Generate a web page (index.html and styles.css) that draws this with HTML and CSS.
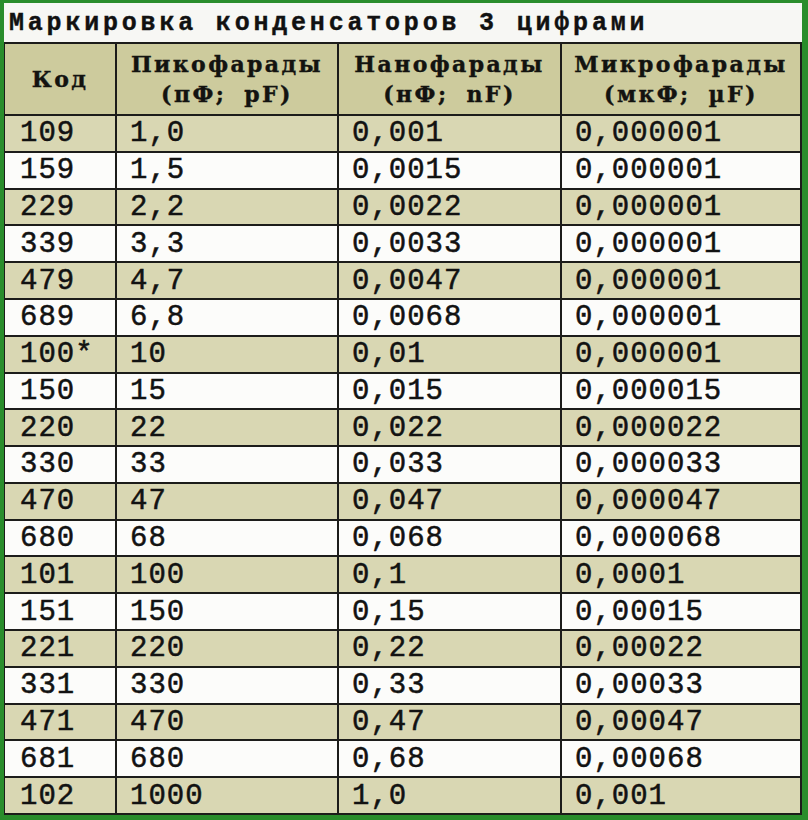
FILE: index.html
```html
<!DOCTYPE html>
<html lang="ru">
<head>
<meta charset="utf-8">
<title>Маркировка конденсаторов 3 цифрами</title>
<link rel="stylesheet" href="styles.css">
</head>
<body>
<div class="frame">
  <div class="title">Маркировка конденсаторов 3 цифрами</div>
  <div class="table">
    <div class="row head">
      <div class="c h">Код</div>
      <div class="c h"><span>Пикофарады</span><span>(пФ; pF)</span></div>
      <div class="c h"><span>Нанофарады</span><span>(нФ; nF)</span></div>
      <div class="c h"><span>Микрофарады</span><span>(мкФ; µF)</span></div>
    </div>
    <div class="row alt"><div class="c">109</div><div class="c">1,0</div><div class="c">0,001</div><div class="c">0,000001</div></div>
    <div class="row"><div class="c">159</div><div class="c">1,5</div><div class="c">0,0015</div><div class="c">0,000001</div></div>
    <div class="row alt"><div class="c">229</div><div class="c">2,2</div><div class="c">0,0022</div><div class="c">0,000001</div></div>
    <div class="row"><div class="c">339</div><div class="c">3,3</div><div class="c">0,0033</div><div class="c">0,000001</div></div>
    <div class="row alt"><div class="c">479</div><div class="c">4,7</div><div class="c">0,0047</div><div class="c">0,000001</div></div>
    <div class="row"><div class="c">689</div><div class="c">6,8</div><div class="c">0,0068</div><div class="c">0,000001</div></div>
    <div class="row alt"><div class="c">100*</div><div class="c">10</div><div class="c">0,01</div><div class="c">0,000001</div></div>
    <div class="row"><div class="c">150</div><div class="c">15</div><div class="c">0,015</div><div class="c">0,000015</div></div>
    <div class="row alt"><div class="c">220</div><div class="c">22</div><div class="c">0,022</div><div class="c">0,000022</div></div>
    <div class="row"><div class="c">330</div><div class="c">33</div><div class="c">0,033</div><div class="c">0,000033</div></div>
    <div class="row alt"><div class="c">470</div><div class="c">47</div><div class="c">0,047</div><div class="c">0,000047</div></div>
    <div class="row"><div class="c">680</div><div class="c">68</div><div class="c">0,068</div><div class="c">0,000068</div></div>
    <div class="row alt"><div class="c">101</div><div class="c">100</div><div class="c">0,1</div><div class="c">0,0001</div></div>
    <div class="row"><div class="c">151</div><div class="c">150</div><div class="c">0,15</div><div class="c">0,00015</div></div>
    <div class="row alt"><div class="c">221</div><div class="c">220</div><div class="c">0,22</div><div class="c">0,00022</div></div>
    <div class="row"><div class="c">331</div><div class="c">330</div><div class="c">0,33</div><div class="c">0,00033</div></div>
    <div class="row alt"><div class="c">471</div><div class="c">470</div><div class="c">0,47</div><div class="c">0,00047</div></div>
    <div class="row"><div class="c">681</div><div class="c">680</div><div class="c">0,68</div><div class="c">0,00068</div></div>
    <div class="row alt"><div class="c">102</div><div class="c">1000</div><div class="c">1,0</div><div class="c">0,001</div></div>
  </div>
</div>
</body>
</html>
```

FILE: styles.css
```css
html, body {
  margin: 0;
  padding: 0;
  background: #ffffff;
}

.frame {
  width: 808px;
  height: 820px;
  box-sizing: border-box;
  background: #2a8d2c;
  padding: 3px 6px 5px 4px;
  display: flex;
  flex-direction: column;
}

.title {
  height: 39px;
  box-sizing: border-box;
  background: #f7f7f4;
  padding: 6px 0 0 5px;
  font-family: "Liberation Mono", "Courier New", monospace;
  font-weight: bold;
  font-size: 25px;
  letter-spacing: 3.8px;
  line-height: 30px;
  color: #111111;
  -webkit-text-stroke: 0.4px #111111;
  white-space: nowrap;
}

.table {
  flex: 1;
  display: grid;
  grid-template-columns: 110px 220px 221px 238px;
  grid-template-rows: 70px repeat(19, 1fr);
  gap: 2px;
  padding: 2px 2px 2px 1px;
  background: #1c1c1a;
}

.row {
  display: contents;
}

.c {
  background: #fcfcfa;
  display: flex;
  align-items: center;
  padding-left: 13px;
  padding-top: 1px;
  font-family: "Liberation Mono", "Courier New", monospace;
  font-size: 29px;
  letter-spacing: 1px;
  color: #121212;
  -webkit-text-stroke: 0.5px #121212;
  white-space: nowrap;
}

.row .c:first-child {
  padding-left: 15px;
}

.row.alt .c {
  background: #d9d7b3;
}

.row.head .c {
  background: #cdcb9d;
  padding: 0;
  flex-direction: column;
  justify-content: center;
  font-family: "DejaVu Serif", "Liberation Serif", serif;
  font-weight: bold;
  font-size: 22px;
  letter-spacing: 2.4px;
  word-spacing: 8px;
  line-height: 30px;
  color: #131310;
  -webkit-text-stroke: 0.4px #131310;
}
```
